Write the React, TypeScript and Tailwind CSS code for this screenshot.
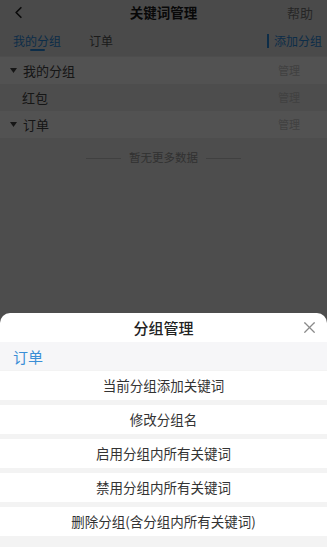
import { ChevronLeft, X } from 'lucide-react';

const groups = [
  { name: '我的分组', items: ['红包'] },
  { name: '订单', items: [] as string[] },
];

const actions = [
  '当前分组添加关键词',
  '修改分组名',
  '启用分组内所有关键词',
  '禁用分组内所有关键词',
  '删除分组(含分组内所有关键词)',
];

function Caret() {
  return (
    <svg width="7" height="5" viewBox="0 0 7 5" className="mr-[6px]">
      <path d="M0 0 H7 L3.5 5 Z" fill="#444" />
    </svg>
  );
}

export default function App() {
  return (
    <div
      className="relative h-[547px] w-full overflow-hidden bg-[#efefef]"
      style={{ fontFamily: '"Noto Sans CJK SC", "Noto Sans", sans-serif' }}
    >
      {/* Header */}
      <div className="relative flex h-[25px] items-center justify-center bg-[#e6e6e6]">
        <ChevronLeft className="absolute left-[9px] top-[3px] h-[19px] w-[19px] text-[#222]" strokeWidth={2.2} />
        <span className="text-[13.5px] font-bold leading-none text-[#1a1a1a]">关键词管理</span>
        <span className="absolute right-[14px] text-[13px] leading-none text-[#777]">帮助</span>
      </div>

      {/* Tabs */}
      <div className="flex h-[31px] items-center bg-[#e6e6e6] pl-[13px] pr-[5px]">
        <div className="relative flex h-full items-center">
          <span className="text-[12px] leading-none text-[#2b8be0]">我的分组</span>
          <span className="absolute bottom-[5px] left-[17px] h-[2px] w-[15px] rounded bg-[#2b8be0]" />
        </div>
        <span className="ml-[28px] text-[12px] leading-none text-[#555]">订单</span>
        <div className="ml-auto flex items-center">
          <span className="mr-[5px] h-[14px] w-[2px] bg-[#2b8be0]" />
          <span className="text-[12px] leading-none text-[#2b8be0]">添加分组</span>
        </div>
      </div>

      {/* Group list */}
      <div className="pt-[1px]">
        {groups.map((g) => (
          <div key={g.name}>
            <div className="flex h-[27px] items-center bg-white pl-[10px] pr-[27px]">
              <Caret />
              <span className="text-[13px] leading-none text-[#444]">{g.name}</span>
              <span className="ml-auto text-[11px] leading-none text-[#c8c8c8]">管理</span>
            </div>
            {g.items.map((it) => (
              <div key={it} className="flex h-[27px] items-center pl-[22px] pr-[27px]">
                <span className="text-[13px] leading-none text-[#444]">{it}</span>
                <span className="ml-auto text-[11px] leading-none text-[#c8c8c8]">管理</span>
              </div>
            ))}
          </div>
        ))}
      </div>

      <div className="flex h-[40px] items-center justify-center gap-[8px]">
        <span className="h-px w-[35px] bg-[#c8c8c8]" />
        <span className="text-[11.5px] leading-none text-[#999]">暂无更多数据</span>
        <span className="h-px w-[35px] bg-[#c8c8c8]" />
      </div>

      {/* Mask */}
      <div className="absolute inset-0 bg-black/[0.68]" />

      {/* Bottom sheet */}
      <div className="absolute inset-x-0 bottom-0 flex h-[234px] flex-col overflow-hidden rounded-t-[10px] bg-white">
        <div className="relative flex h-[29px] shrink-0 items-center justify-center">
          <span className="text-[15px] font-medium leading-none text-[#222]">分组管理</span>
          <X className="absolute right-[8px] top-[5px] h-[19px] w-[19px] text-[#8a8a8a]" strokeWidth={1.5} />
        </div>
        <div className="flex h-[28px] shrink-0 items-center bg-[#f6f6f8] pl-[13px]">
          <span className="text-[15px] leading-none text-[#3a8ed6]">订单</span>
        </div>
        <div className="flex flex-1 flex-col gap-[5px] bg-[#f3f3f3] pt-[1px]">
          {actions.map((a) => (
            <div key={a} className="flex h-[29px] shrink-0 items-center justify-center bg-white">
              <span className="text-[13.5px] leading-none text-[#333]">{a}</span>
            </div>
          ))}
        </div>
      </div>
    </div>
  );
}
